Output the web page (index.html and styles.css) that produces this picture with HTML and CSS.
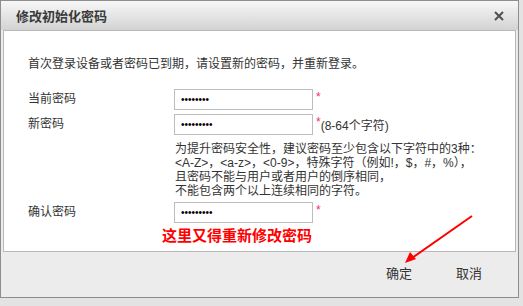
FILE: index.html
```html
<!DOCTYPE html>
<html lang="zh-CN">
<head>
  <meta charset="UTF-8" />
  <title>修改初始化密码</title>
  <link rel="stylesheet" href="styles.css">
</head>
<body>
  <div class="dialog">
    <div class="dialog-header">
      <h1>修改初始化密码</h1>
      <button type="button" class="close-btn" aria-label="关闭">
        <svg width="10" height="10" viewBox="0 0 10 10">
          <path d="M1 1 L9 9 M9 1 L1 9" stroke="#505050" stroke-width="2" fill="none"/>
        </svg>
      </button>
    </div>

    <div class="panel">
      <p class="intro">首次登录设备或者密码已到期，请设置新的密码，并重新登录。</p>

      <form id="pwdForm">
        <div class="row">
          <label for="oldPwd">当前密码</label>
          <div class="field">
            <input type="password" id="oldPwd" value="12345678" />
            <span class="req">*</span>
          </div>
        </div>

        <div class="row">
          <label for="newPwd">新密码</label>
          <div class="field">
            <input type="password" id="newPwd" value="123456789" />
            <span class="req">*</span><span class="hint">(8-64个字符)</span>
          </div>
        </div>

        <p class="rules">
          为提升密码安全性，建议密码至少包含以下字符中的3种：<br>
          &lt;A-Z&gt;，&lt;a-z&gt;，&lt;0-9&gt;，特殊字符（例如!，$，#，%），<br>
          且密码不能与用户或者用户的倒序相同，<br>
          不能包含两个以上连续相同的字符。
        </p>

        <div class="row">
          <label for="confirmPwd">确认密码</label>
          <div class="field">
            <input type="password" id="confirmPwd" value="123456789" />
            <span class="req">*</span>
          </div>
        </div>
      </form>

      <p class="note">这里又得重新修改密码</p>
    </div>

    <div class="dialog-footer">
      <button type="button" class="text-btn">确定</button>
      <button type="button" class="text-btn">取消</button>
    </div>

    <!-- annotation arrow drawn over the dialog -->
    <svg class="arrow" width="523" height="306" viewBox="0 0 523 306">
      <line x1="472" y1="216" x2="412" y2="258" stroke="#f00" stroke-width="2"/>
      <polygon points="405,263 410,252 416,259" fill="#f00"/>
    </svg>
  </div>
</body>
</html>
```

FILE: styles.css
```css
body {
  margin: 0;
  background: #e3e3e3;
  font-family: "Liberation Sans", "Noto Sans CJK SC", sans-serif;
  font-size: 12px;
  color: #333;
}
.dialog {
  position: relative;
  width: 517px;
  height: 296px;
  border: 1px solid #8e8e8e;
  background: #ececec;
}
.dialog-header {
  height: 29px;
  display: flex;
  align-items: center;
  justify-content: space-between;
  padding: 0 14px 0 15px;
  background: linear-gradient(#f7f7f7, #d3d3d3);
}
.dialog-header h1 {
  margin: 0;
  font-size: 13px;
  font-weight: bold;
  color: #3a3a3a;
}
.close-btn {
  border: none;
  background: none;
  padding: 0;
  display: flex;
  cursor: pointer;
}
.panel {
  height: 220px;
  margin: 0 2px;
  border: 1px solid #b8b8b8;
  background: #fff;
  padding: 0 0 0 24px;
}
.intro {
  margin: 0;
  padding-top: 25px;
  line-height: 16px;
}
#pwdForm {
  margin-top: 17px;
}
.row {
  display: flex;
  align-items: flex-start;
  margin-bottom: 4px;
}
.row label {
  width: 146px;
  line-height: 16px;
  padding-top: 2px;
}
.field {
  display: flex;
  align-items: flex-start;
}
.field input {
  box-sizing: border-box;
  width: 139px;
  height: 21px;
  border: 1px solid #bdbdbd;
  padding: 0 6px;
  font-size: 10px;
  color: #000;
  outline: none;
}
.req {
  color: #f0306a;
  margin-left: 3px;
  line-height: 16px;
}
.hint {
  line-height: 24px;
  margin-top: 0;
}
.rules {
  margin: 0 0 4px 147px;
  line-height: 14px;
}
.note {
  margin: 4px 0 0 134px;
  color: #f00;
  font-size: 15px;
  font-weight: bold;
  line-height: 18px;
}
.dialog-footer {
  height: 44px;
  display: flex;
  justify-content: flex-end;
  align-items: center;
  padding-right: 14px;
}
.text-btn {
  width: 70px;
  border: none;
  background: none;
  font-family: inherit;
  font-size: 13px;
  color: #333;
  padding: 0;
  margin-top: -4px;
  cursor: pointer;
}
.arrow {
  position: absolute;
  left: -1px;
  top: -1px;
  pointer-events: none;
}
```
